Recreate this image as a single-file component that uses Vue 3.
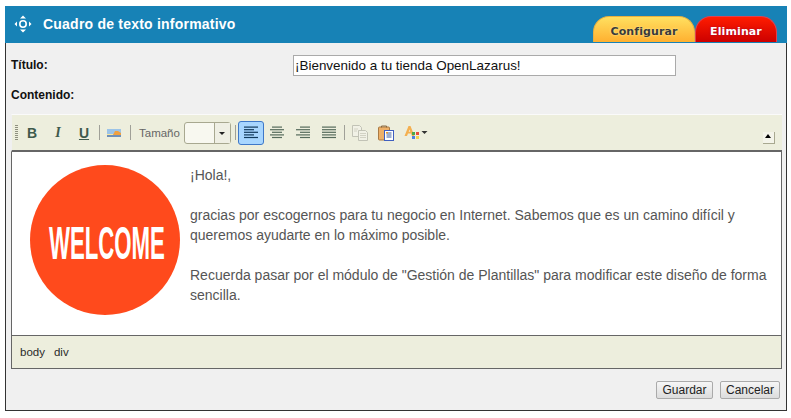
<script setup>
const alignRows = {
  left: [[0,14],[0,10],[0,14],[0,10],[0,14]],
  center: [[2,10],[0,14],[2,10],[0,14],[2,10]],
  right: [[4,10],[0,14],[4,10],[0,14],[4,10]],
  full: [[0,14],[0,14],[0,14],[0,14],[0,14]],
}
const aligns = ['left', 'center', 'right', 'full']
</script>

<template>
  <div class="page">
    <section class="panel">
      <header class="head">
        <svg class="move" width="18" height="18" viewBox="0 0 18 18">
          <circle cx="9" cy="9" r="3.2" fill="none" stroke="#fff" stroke-width="1.6" />
          <path d="M6 3.5 9 .5l3 3zM6 14.5l3 3 3-3zM3 6.5 .5 9 3 11.5zM15 6.5 17.5 9 15 11.5z" fill="#fff" />
        </svg>
        <h1>Cuadro de texto informativo</h1>
        <div class="tabs">
          <button class="tab yellow">Configurar</button>
          <button class="tab red">Eliminar</button>
        </div>
      </header>

      <div class="body">
        <div class="row-title">
          <label>Título:</label>
          <input class="title-input" value="¡Bienvenido a tu tienda OpenLazarus!" />
        </div>
        <label class="content-label">Contenido:</label>

        <div class="editor">
          <div class="toolbar">
            <span class="grip"></span>
            <span class="tb fmt b">B</span>
            <span class="tb fmt i">I</span>
            <span class="tb fmt u">U</span>
            <span class="sep s1"></span>
            <span class="tb">
              <svg width="14" height="8" viewBox="0 0 14 8">
                <rect width="14" height="8" fill="#9cc4e8" />
                <rect y="6" width="14" height="2" fill="#6f8fb8" />
                <path d="M6 6 8 2h3l3 2v2z" fill="#f0a040" />
                <path d="M0 5h6v1H0z" fill="#f6e6a0" />
              </svg>
            </span>
            <span class="sep s2"></span>
            <span class="size-label">Tamaño</span>
            <span class="select"><span class="select-val"></span><span class="select-arrow"></span></span>
            <span class="sep s3"></span>
            <span
              v-for="a in aligns"
              :key="a"
              class="tb"
              :class="{ active: a === 'left' }"
            >
              <svg width="14" height="13" viewBox="0 0 14 13">
                <rect
                  v-for="(r, i) in alignRows[a]"
                  :key="i"
                  :x="r[0]"
                  :y="i * 2.6 + 0.5"
                  :width="r[1]"
                  height="1.2"
                  :fill="a === 'left' ? '#123a5c' : '#566b5c'"
                />
              </svg>
            </span>
            <span class="sep s4"></span>
            <span class="tb">
              <svg width="16" height="16" viewBox="0 0 16 16">
                <path d="M.5.5h7l2 2v9h-9z" fill="#f1f1e6" stroke="#c2c3b6" />
                <path d="M6.5 5.500h7l2 2v8h-9z" fill="#f1f1e6" stroke="#c2c3b6" />
                <path d="M8 8.500h6M8 10.500h6M8 12.500h6M2 4h4M2 6h3" stroke="#d2d2c4" />
              </svg>
            </span>
            <span class="tb">
              <svg width="16" height="16" viewBox="0 0 16 16">
                <rect x=".5" y="2" width="11" height="13" rx="1" fill="#eeb068" stroke="#a97a44" />
                <path d="M3.500 2.500V1h5v1.500" fill="none" stroke="#8a6a40" />
                <rect x="6.500" y="5.500" width="9" height="10" fill="#fff" stroke="#3f5fc0" />
                <path d="M8.500 8h5M8.500 10h5M8.500 12h5" stroke="#3f5fa0" />
                <rect x="8" y="7" width="2" height="1.500" fill="#e89a30" />
              </svg>
            </span>
            <span class="color">
              <svg width="24" height="16" viewBox="0 0 24 16">
                <path d="M.5 11 4.500 1h2l4 10H8L7 8.500H4L3 11z" fill="#f4b050" />
                <path d="M4.700 6.800h1.600L5.500 4.500z" fill="#eeeedd" />
                <rect x="8" y="7" width="3" height="3" fill="#4aa84a" />
                <rect x="12" y="7" width="3" height="3" fill="#e84a3a" />
                <rect x="8" y="11" width="3" height="3" fill="#4a80e0" />
                <rect x="12" y="11" width="3" height="3" fill="#f0d050" />
                <path d="M17.500 6h6l-3 3z" fill="#333" />
              </svg>
            </span>
            <span class="collapse"><i></i></span>
          </div>

          <div class="content">
            <svg class="welcome" width="150" height="150" viewBox="0 0 150 150">
              <circle cx="75" cy="75" r="75" fill="#ff4a1c" />
              <text
                transform="translate(19 94) scale(1 2.12)"
                font-family="'Liberation Sans', sans-serif"
                font-weight="700"
                font-size="22.2"
                fill="#fff"
              >WELCOME</text>
            </svg>
            <div class="copy">
              <p>¡Hola!,</p>
              <p>gracias por escogernos para tu negocio en Internet. Sabemos que es un camino difícil y queremos ayudarte en lo máximo posible.</p>
              <p>Recuerda pasar por el módulo de "Gestión de Plantillas" para modificar este diseño de forma sencilla.</p>
            </div>
          </div>

          <div class="status"><span>body</span><span>div</span></div>
        </div>

        <div class="actions">
          <button class="btn">Guardar</button>
          <button class="btn">Cancelar</button>
        </div>
      </div>
    </section>
  </div>
</template>

<style>
html, body { margin: 0; background: #fff; }
</style>

<style scoped>
.page {
  width: 791px;
  height: 418px;
  box-sizing: border-box;
  padding: 6px 4px 0 5px;
  font-family: "Liberation Sans", Arial, sans-serif;
  overflow: hidden;
}
.panel { width: 782px; }
.head {
  height: 37px;
  background: #1782b6;
  display: flex;
  align-items: center;
  padding-left: 9px;
  box-sizing: border-box;
  position: relative;
}
.move { margin-top: -1px; }
.head h1 {
  margin: -2px 0 0 11px;
  font-size: 14px;
  font-weight: 700;
  letter-spacing: 0.22px;
  color: #fff;
}
.tabs {
  margin-left: auto;
  margin-right: 10px;
  align-self: flex-end;
  display: flex;
  gap: 0;
  padding-bottom: 1px;
}
.tab {
  border: 1px solid;
  border-bottom: 0;
  border-radius: 16px 16px 0 0;
  height: 26px;
  padding: 3px 0 0;
  font-family: "DejaVu Sans", Verdana, sans-serif;
  font-size: 11px;
  font-weight: 700;
  letter-spacing: 0.1px;
}
.yellow {
  width: 102px;
  color: #3a3a3a;
  background: linear-gradient(#ffe060, #ffb030);
  border-color: #e8b040;
  text-shadow: 0 0 2px #fff8b0;
}
.red {
  width: 82px;
  color: #fff;
  background: linear-gradient(#ff1c00, #cc0000);
  border-color: #e04050;
  text-shadow: 0 0 2px #a00030;
}
.body {
  height: 368px;
  box-sizing: border-box;
  background: #f0f0f0;
  border: 1px solid #333;
  border-top: 0;
  padding: 0 4px 0 5px;
}
label {
  font-size: 12px;
  font-weight: 700;
  color: #111;
}
.row-title {
  display: flex;
  align-items: flex-start;
  padding-top: 12px;
  height: 45px;
  box-sizing: border-box;
}
.row-title label { width: 282px; margin-top: 3px; }
.title-input {
  width: 383px;
  height: 21px;
  box-sizing: border-box;
  border: 1px solid #aaa;
  background: #fff;
  padding: 0 1px;
  font-family: "Liberation Sans", Arial, sans-serif;
  font-size: 13.45px;
  color: #111;
  outline: 0;
}
.content-label { display: block; height: 26px; line-height: 14px; }
.editor { width: 771px; }
.toolbar {
  height: 38px;
  box-sizing: border-box;
  background: #edeedd;
  border-top: 1px solid #fafafa;
  border-bottom: 2px solid #666;
  border-left: 1px solid #f0f0f0;
  display: flex;
  align-items: center;
  padding-left: 3px;
  position: relative;
}
.grip {
  width: 3px;
  height: 15px;
  margin-right: 1px;
  background: repeating-linear-gradient(#8f9080 0 1px, transparent 1px 2px);
}
.tb {
  width: 26px;
  height: 24px;
  flex: none;
  display: flex;
  align-items: center;
  justify-content: center;
  box-sizing: border-box;
}
.fmt {
  font-size: 14px;
  color: #3f5a4c;
  font-weight: 700;
}
.i { font-style: italic; font-family: "Liberation Serif", serif; }
.u { text-decoration: underline; }
.active {
  background: #a8d6ff;
  border: 1px solid #3f78c8;
  border-radius: 3px;
}
.sep {
  width: 1px;
  height: 15px;
  background: #a0a098;
  flex: none;
}
.s1 { margin: 0 1px 0 2px; }
.s2 { margin: 0 8px 0 3px; }
.size-label { font-size: 11.5px; color: #666; width: 41px; flex: none; }
.select {
  margin-left: 4px;
  width: 47px;
  height: 22px;
  box-sizing: border-box;
  border: 1px solid #a8a890;
  border-radius: 3px;
  display: flex;
  background: #f8f8f0;
  flex: none;
}
.select-val { flex: 1; }
.select-arrow {
  width: 15px;
  border-left: 1px solid #a8a890;
  background: #efefe4;
  position: relative;
}
.select-arrow::after {
  content: "";
  position: absolute;
  left: 4px;
  top: 9px;
  border: 3px solid transparent;
  border-top-color: #222;
}
.s3 { margin: 0 2px 0 4px; }
.s4 { margin: 0 2px 0 2px; }
.color { width: 24px; display: flex; justify-content: center; margin-left: 5px; flex: none; }
.collapse {
  position: absolute;
  right: 7px;
  bottom: 6px;
  width: 12px;
  height: 12px;
  box-sizing: border-box;
  background: #f4f4ea;
  border-right: 1px solid #a8a890;
  border-bottom: 1px solid #a8a890;
}
.collapse i {
  position: absolute;
  left: 2px;
  top: 2px;
  border: 3px solid transparent;
  border-bottom: 4px solid #000;
  border-top: 0;
}
.content {
  height: 184px;
  box-sizing: border-box;
  background: #fff;
  border-left: 1px solid #666;
  border-right: 1px solid #666;
  border-bottom: 1px solid #666;
  display: flex;
  padding: 13px 0 0 18px;
}
.welcome { flex: none; }
.copy {
  margin: 0 0 0 10px;
  font-size: 14px;
  line-height: 20px;
  color: #555;
  width: 578px;
}
.copy p { margin: 0 0 20px; }
.status {
  height: 33px;
  box-sizing: border-box;
  background: #edeedd;
  border: 1px solid #666;
  border-top: 0;
  display: flex;
  align-items: center;
  gap: 9px;
  padding-left: 8px;
  font-size: 11.5px;
  color: #2a2a2a;
}
.actions {
  display: flex;
  justify-content: flex-end;
  gap: 7px;
  padding: 12px 2px 0 0;
}
.btn {
  height: 18px;
  padding: 0;
  width: 57px;
  border: 1px solid #aaa;
  border-radius: 2px;
  background: linear-gradient(#f6f6f6, #dcdcdc);
  font-family: "Liberation Sans", Arial, sans-serif;
  font-size: 12px;
  color: #222;
}
.btn:last-child { width: 60px; }
</style>
